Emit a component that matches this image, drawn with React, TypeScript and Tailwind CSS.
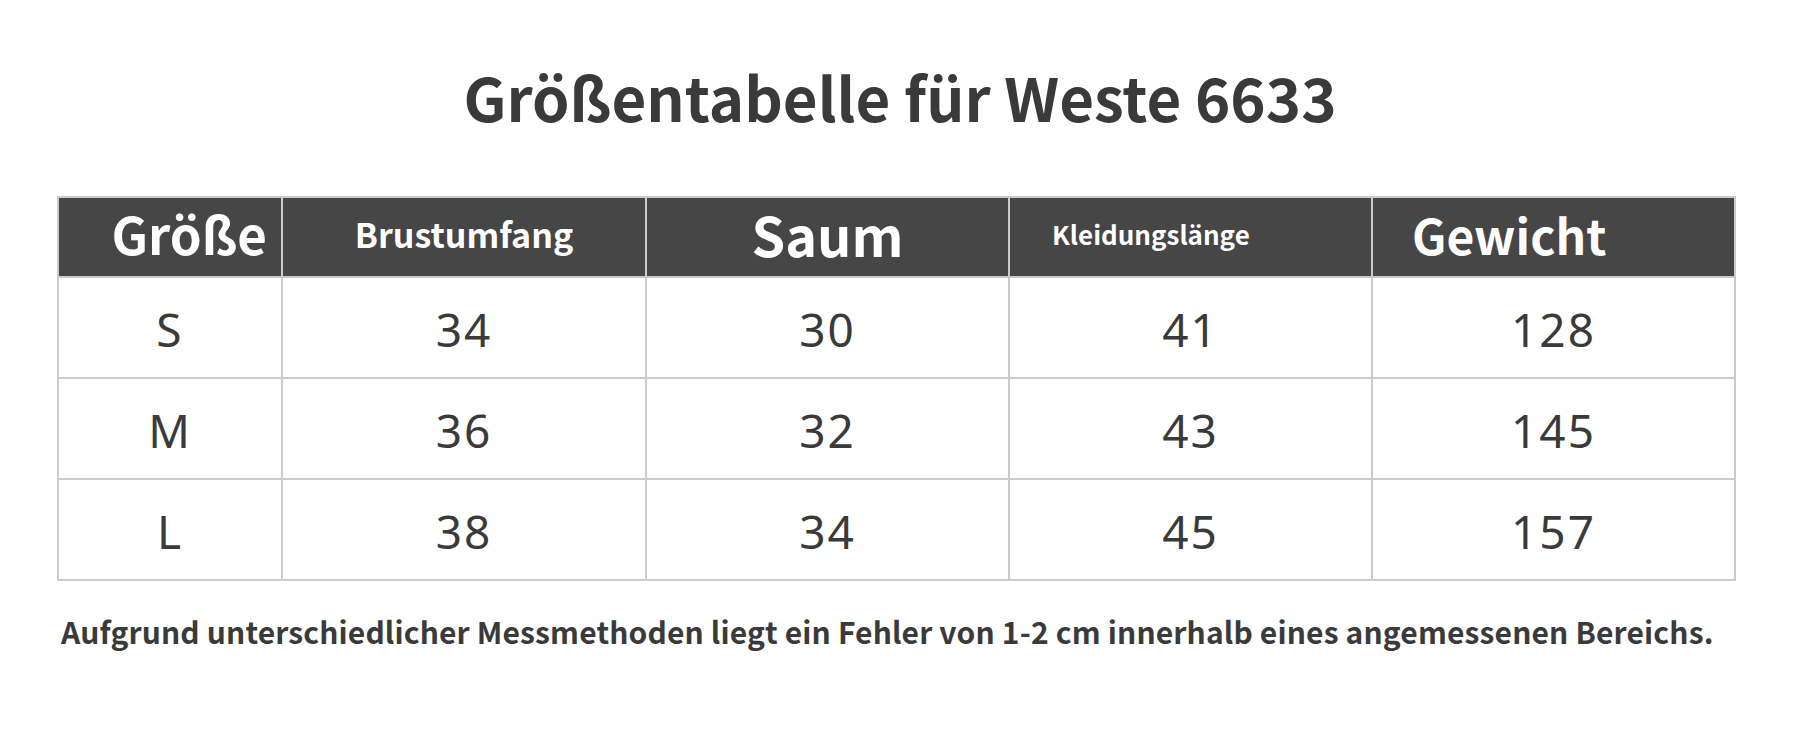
const headers = [
  { label: "Größe", cls: "text-right pr-[14px] text-[51px]" },
  { label: "Brustumfang", cls: "text-center text-[34px]" },
  { label: "Saum", cls: "text-center text-[54px]" },
  { label: "Kleidungslänge", cls: "text-left pl-[42px] text-[26px]" },
  { label: "Gewicht", cls: "text-left pl-[39px] text-[48px]" },
];

const rows = [
  ["S", "34", "30", "41", "128"],
  ["M", "36", "32", "43", "145"],
  ["L", "38", "34", "45", "157"],
];

const colWidths = ["w-[224px]", "w-[364px]", "w-[363px]", "w-[363px]", "w-[363px]"];

export default function App() {
  return (
    <div className="h-[743px] w-[1800px] bg-white font-['Noto_Sans_CJK_SC',sans-serif] text-[#3a3a3a]">
      <h1 className="pt-[66px] text-center text-[60px] leading-none font-bold">
        Größentabelle für Weste 6633
      </h1>

      <table className="mt-[70px] ml-[57px] w-[1677px] table-fixed border-collapse border-2 border-[#cbcbcb]">
        <colgroup>
          {colWidths.map((w, i) => (
            <col key={i} className={w} />
          ))}
        </colgroup>
        <thead>
          <tr className="h-[80px] bg-[#464646]">
            {headers.map((h) => (
              <th
                key={h.label}
                className={`border-2 border-[#cbcbcb] pb-[7px] leading-none font-bold text-white ${h.cls}`}
              >
                {h.label}
              </th>
            ))}
          </tr>
        </thead>
        <tbody>
          {rows.map((row) => (
            <tr key={row[0]} className="h-[101px]">
              {row.map((cell, i) => (
                <td
                  key={i}
                  className="border-2 border-[#cbcbcb] pt-[2px] text-center font-['Noto_Sans',sans-serif] text-[46px] leading-none tracking-[2px]"
                >
                  {cell}
                </td>
              ))}
            </tr>
          ))}
        </tbody>
      </table>

      <p className="mt-[35px] ml-[61px] text-[30px] leading-none font-bold tracking-[0.15px]">
        Aufgrund unterschiedlicher Messmethoden liegt ein Fehler von 1-2 cm innerhalb eines angemessenen Bereichs.
      </p>
    </div>
  );
}
